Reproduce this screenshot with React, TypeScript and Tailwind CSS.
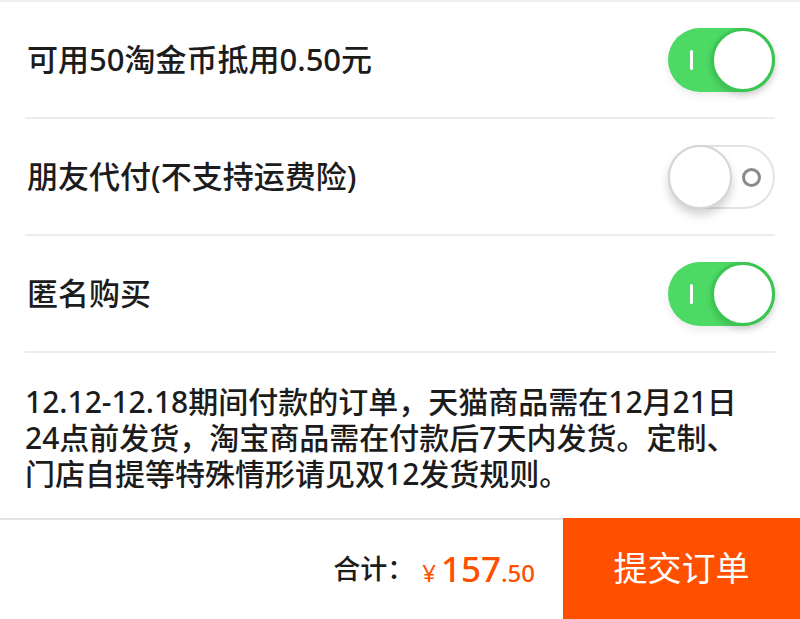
import React from "react";

const font = { fontFamily: '"Noto Sans", "Noto Sans CJK SC", sans-serif' };

function ToggleOn() {
  return (
    <div className="relative h-[64px] w-[107px] rounded-full bg-[#4cd964] shadow-[0_4px_8px_rgba(0,0,0,0.08)]">
      <div className="absolute left-[22px] top-[22px] h-[20px] w-[3px] rounded-full bg-white" />
      <div className="absolute right-0 top-0 h-[64px] w-[64px] rounded-full border-[3px] border-[#3cc552] bg-white shadow-[0_3px_6px_rgba(0,0,0,0.15)]" />
    </div>
  );
}

function ToggleOff() {
  return (
    <div className="relative h-[64px] w-[107px] rounded-full border-2 border-[#e3e3e3] bg-white">
      <div className="absolute left-[72px] top-[21px] h-[19px] w-[19px] rounded-full border-[3px] border-[#8a8a8a]" />
      <div className="absolute left-[-2px] top-[-2px] h-[64px] w-[64px] rounded-full border-2 border-[#d6d6d6] bg-white shadow-[0_6px_10px_rgba(0,0,0,0.18)]" />
    </div>
  );
}

function Row({ label, on }: { label: string; on: boolean }) {
  return (
    <div className="mx-[25px] flex h-[117px] items-center justify-between border-b-2 border-[#ececec]">
      <span className="pl-[2px] text-[31px] font-medium text-[#1c1c1c]">{label}</span>
      {on ? <ToggleOn /> : <ToggleOff />}
    </div>
  );
}

export default function App() {
  return (
    <div className="flex h-[619px] w-[800px] flex-col overflow-hidden bg-white" style={font}>
      <div className="h-[2px] bg-[#eeeeee]" />
      <Row label="可用50淘金币抵用0.50元" on={true} />
      <Row label="朋友代付(不支持运费险)" on={false} />
      <Row label="匿名购买" on={true} />
      <div className="flex-1 pl-[25px] pr-[35px] pt-[31px] text-[30px] font-medium leading-[36px] text-[#1c1c1c]">
        12.12-12.18期间付款的订单，天猫商品需在12月21日24点前发货，淘宝商品需在付款后7天内发货。定制、门店自提等特殊情形请见双12发货规则。
      </div>
      <div className="flex h-[101px] items-stretch border-t-2 border-[#e2e2e2]">
        <div className="flex flex-1 items-center justify-end pr-[28px]">
          <span className="text-[27px] font-medium text-[#1c1c1c]">合计：</span>
          <span className="ml-[8px] flex items-baseline text-[#ff5000]">
            <span className="text-[24px]">¥</span>
            <span className="ml-[5px] text-[35px] font-medium">157</span>
            <span className="text-[24px] font-medium">.50</span>
          </span>
        </div>
        <div className="-mt-[2px] flex w-[237px] items-center justify-center bg-[#ff5000] text-[34px] text-white">
          提交订单
        </div>
      </div>
    </div>
  );
}
